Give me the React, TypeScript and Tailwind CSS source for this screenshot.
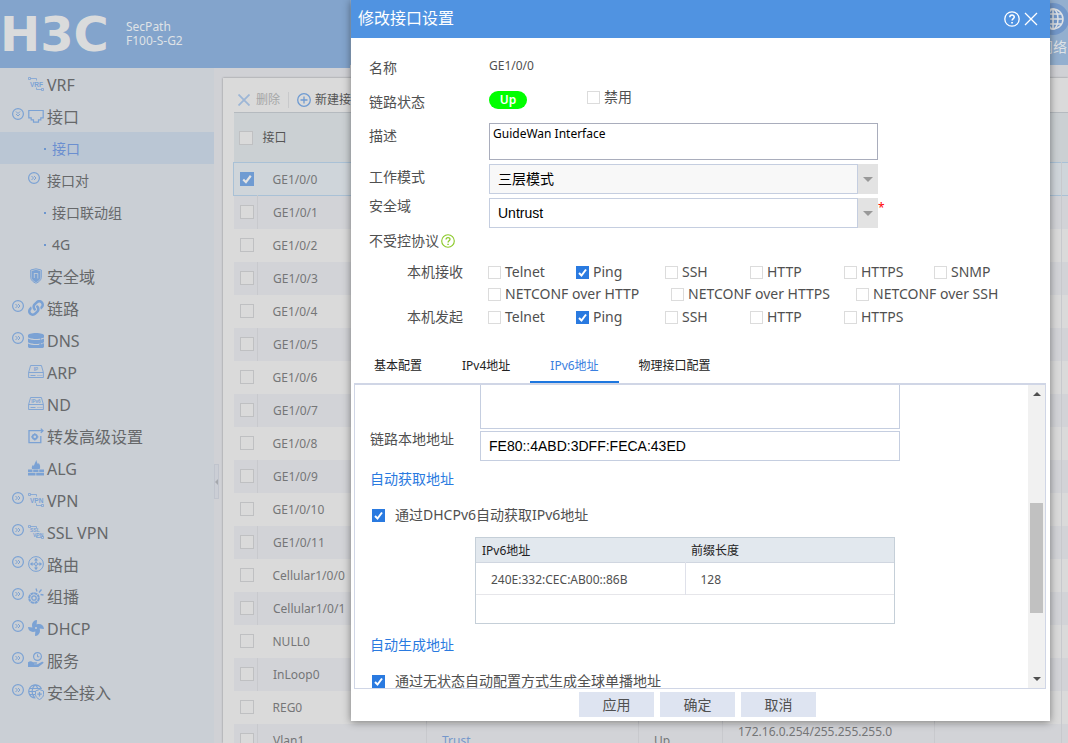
import * as React from "react";
import { useState } from "react";
import clsx from "clsx";
import { FaDatabase, FaFan, FaLink } from "react-icons/fa";

const WordIcon = ({ lines }: { lines: string[] }) => (
  <svg viewBox="0 0 16 16" className="size-4" fill="none" stroke="currentColor">
    <path d="M.5 1.500h2v2h-2zM2.500 2.500h6v2M13.500 12.500h2v2h-2zM13.500 13.500H8.500v-2" strokeWidth="0.8" />
    {lines.map((line, i) => (
      <text
        key={line}
        x={i === 0 ? 2 : 5}
        y={lines.length === 1 ? 10.5 : 8 + i * 5}
        fontSize={lines.length === 1 ? 6.5 : 5}
        fontWeight="bold"
        fontFamily="Liberation Sans, sans-serif"
        fill="currentColor"
        stroke="none"
      >
        {line}
      </text>
    ))}
  </svg>
);

const PortIcon = () => (
  <svg viewBox="0 0 16 16" className="size-4" fill="none" stroke="currentColor" strokeWidth="1.2">
    <path d="M.8 2.500h14.400v7.300h-2.400v2h-2.300v2.400h-5v-2.400H3.200v-2H.8z" />
  </svg>
);

const ShieldIcon = () => (
  <svg viewBox="0 0 16 16" className="size-4" fill="none" stroke="currentColor">
    <path d="M8 .8 13.300 2v7.200c0 3-2.600 5-5.300 6-2.700-1-5.300-3-5.300-6V2z" />
    <path d="M8 1.800 12.400 2.900v6.300c0 2.300-2.200 4.100-4.400 5-2.200-.9-4.400-2.700-4.400-5V2.900z" fill="currentColor" stroke="none" />
    <path d="M6.300 5v5M6.300 5.500h3.500v5" stroke="#cacfd5" strokeWidth="0.8" />
  </svg>
);

const DnsIcon = () => (
  <svg viewBox="0 0 16 16" className="size-4" fill="none" stroke="currentColor">
    <FaDatabase x="0" y="1" width="11" height="14" preserveAspectRatio="none" />
    <path d="M11 4.500h3M11 8.500h3M11 12.500h3M12.500 2.500v12" strokeWidth="0.7" />
    <path d="M14 3.500h2v2h-2zM14 7.500h2v2h-2zM14 11.500h2v2h-2z" fill="currentColor" stroke="none" />
  </svg>
);

const DriveIcon = ({ label }: { label: string }) => (
  <svg viewBox="0 0 16 16" className="size-4" fill="none" stroke="currentColor" strokeWidth="0.9">
    <path d="M.6 8.500h14.800v5H.6zM.6 8.500 2.600 1.500h10.800l2 7M2.500 11.500h5M9.500 11.500h1M11.500 11.500h1M13.500 11.500h.8" />
    <text
      x="8"
      y="6.8"
      textAnchor="middle"
      fontSize="4.5"
      fontWeight="bold"
      fontFamily="Liberation Sans, sans-serif"
      fill="currentColor"
      stroke="none"
    >
      {label}
    </text>
  </svg>
);

const ForwardIcon = () => (
  <svg viewBox="0 0 16 16" className="size-4" fill="none" stroke="currentColor" strokeWidth="1.3">
    <path d="M8.500 2.700H1v12h11.800V8M8.500 2.700H15M12.800.6 15 2.700l-2.200 2.200" />
    <circle cx="6.8" cy="8.8" r="2.2" strokeWidth="1.8" />
    <path d="M6.800 5.200v1M6.800 11.400v1M3.200 8.800h1M9.400 8.800h1" />
  </svg>
);

const FirewallIcon = () => (
  <svg viewBox="0 0 16 16" className="size-4" fill="currentColor">
    <path d="M4 9c-.7-2 .4-3.300 1-4.300.4.600.6 1 .7 1.600C6.600 4 7 2.500 8.500 0c0 2.300 1 3 1.600 4.300.4-.4.5-1 .5-1.500C12 4.800 12.700 7 11.700 9z" />
    <path d="M0 9.500h4.500v2.500H0zM5.200 9.500h5.300v2.500H5.200zM11.200 9.500H16v2.500h-4.800zM0 12.700h7.500v2.700H0zM8.200 12.700H16v2.700H8.200z" />
  </svg>
);

const RouteIcon = () => (
  <svg viewBox="0 0 16 16" className="size-4" fill="none" stroke="currentColor">
    <circle cx="8" cy="8" r="7.4" />
    <circle cx="8" cy="8" r="1.5" />
    <path d="M8 3v3M8 10v3M3 8h3M10 8h3" />
    <path d="M8 1.800 10 4.500H6zM8 14.200l2-2.700H6zM1.800 8l2.700-2v4zM14.200 8l-2.700-2v4z" fill="currentColor" stroke="none" />
  </svg>
);

const MulticastIcon = () => (
  <svg viewBox="0 0 16 16" className="size-4" fill="none" stroke="currentColor">
    <circle cx="6" cy="10" r="4.8" strokeWidth="2" strokeDasharray="3.2 0.5" />
    <circle cx="6" cy="10" r="2.2" strokeWidth="1.3" />
    <path d="M8 .5 9 3.500M13.500 1.500 11 4.500M15.500 7 12.500 6.500" strokeWidth="1.3" />
  </svg>
);

const ServiceIcon = () => (
  <svg viewBox="0 0 16 16" className="size-4" fill="none" stroke="currentColor">
    <circle cx="9.5" cy="4.5" r="3.9" strokeWidth="1.2" />
    <path d="M9.500 2.300v2.500h1.800" />
    <path
      d="M0 10.200c2-1.200 3.500-1 5 0h3.500c1 0 1 1.500 0 1.500H6v.5h3.500l4.500-2.400c1.200-.4 2 .6 1.200 1.400L11 14.600c-.5.400-1 .5-1.500.5H0z"
      fill="currentColor"
      stroke="none"
    />
  </svg>
);

const AccessIcon = () => (
  <svg viewBox="0 0 16 16" className="size-4" fill="none" stroke="currentColor">
    <path d="M7.500 14A6.600 6.600 0 1 1 13.500 5M7 .8C3 4.500 3.300 10 6.500 13.500M7 .8c1.500 1 2.500 2.500 2.800 4M1 4.500h11.500M.6 7.500H7M1.300 10.500H7" strokeWidth="1.2" />
    <path d="M11.500 5.500 15.500 7v3.500c0 2.300-2 4-4 5-2-1-4-2.700-4-5V7z" fill="#cacfd5" />
    <path d="M11.500 8v4.500M9.300 10.200h4.500" strokeWidth="1.3" />
  </svg>
);

const ToggleIcon = ({ open }: { open?: boolean }) => (
  <svg viewBox="0 0 12 12" className="size-3" fill="none" stroke="currentColor">
    <circle cx="6" cy="6" r="5.4" strokeWidth="1.2" />
    {open ? <path d="m4 3.500 2 2 2-2M4 6l2 2 2-2" /> : <path d="m3.500 4 2 2-2 2M6 4l2 2-2 2" />}
  </svg>
);

const HelpIcon = ({ className }: { className?: string }) => (
  <svg viewBox="0 0 16 16" className={clsx("size-4", className)} fill="none" stroke="currentColor" strokeWidth="1.3">
    <circle cx="8" cy="8" r="7.2" />
    <path d="M5.800 6.300c0-3 4.500-2.900 4.500-.2 0 1.600-2.200 1.600-2.200 3.500" strokeWidth="1.5" />
    <path d="M7.200 11h1.700v1.600H7.200z" fill="currentColor" stroke="none" />
  </svg>
);

interface MenuItem {
  name: string;
  icon?: React.ReactNode;
  level?: number;
  toggle?: "open" | "closed";
  active?: boolean;
}

const menu: MenuItem[] = [
  { name: "VRF", icon: <WordIcon lines={["VRF"]} /> },
  { name: "接口", icon: <PortIcon />, toggle: "open" },
  { name: "接口", level: 2, active: true },
  { name: "接口对", level: 2, toggle: "closed" },
  { name: "接口联动组", level: 2 },
  { name: "4G", level: 2 },
  { name: "安全域", icon: <ShieldIcon /> },
  { name: "链路", icon: <FaLink className="size-4" />, toggle: "closed" },
  { name: "DNS", icon: <DnsIcon />, toggle: "closed" },
  { name: "ARP", icon: <DriveIcon label="IP" /> },
  { name: "ND", icon: <DriveIcon label="IPv6" /> },
  { name: "转发高级设置", icon: <ForwardIcon /> },
  { name: "ALG", icon: <FirewallIcon /> },
  { name: "VPN", icon: <WordIcon lines={["VPN"]} />, toggle: "closed" },
  { name: "SSL VPN", icon: <WordIcon lines={["SSL", "VPN"]} />, toggle: "closed" },
  { name: "路由", icon: <RouteIcon />, toggle: "closed" },
  { name: "组播", icon: <MulticastIcon />, toggle: "closed" },
  { name: "DHCP", icon: <FaFan className="size-4" />, toggle: "closed" },
  { name: "服务", icon: <ServiceIcon />, toggle: "closed" },
  { name: "安全接入", icon: <AccessIcon />, toggle: "closed" },
];

const interfaces = [
  "GE1/0/0",
  "GE1/0/1",
  "GE1/0/2",
  "GE1/0/3",
  "GE1/0/4",
  "GE1/0/5",
  "GE1/0/6",
  "GE1/0/7",
  "GE1/0/8",
  "GE1/0/9",
  "GE1/0/10",
  "GE1/0/11",
  "Cellular1/0/0",
  "Cellular1/0/1",
  "NULL0",
  "InLoop0",
  "REG0",
  "Vlan1",
];

interface CheckboxProps {
  label?: string;
  title?: string;
  defaultChecked?: boolean;
  dimmed?: boolean;
  className?: string;
}

const Checkbox: React.FC<CheckboxProps> = ({ label, title, defaultChecked, dimmed, className }) => (
  <label className={clsx("flex items-center whitespace-nowrap", className ?? "gap-1")}>
    <span className="grid shrink-0">
      <input
        type="checkbox"
        aria-label={title}
        defaultChecked={defaultChecked}
        className={clsx(
          "peer appearance-none border [grid-area:1/1]",
          dimmed
            ? "size-[14px] border-[#bfc0c2] bg-[#dadada] checked:border-[#6f9bd2] checked:bg-[#6f9bd2]"
            : "size-[13px] border-[#dcdcdc] bg-white checked:border-[#2a7ae0] checked:bg-[#2a7ae0]"
        )}
      />
      <svg
        viewBox="0 0 13 13"
        className={clsx(
          "pointer-events-none invisible [grid-area:1/1] peer-checked:visible",
          dimmed ? "size-[14px] text-[#e4e4e4]" : "size-[13px] text-white"
        )}
        fill="none"
        stroke="currentColor"
        strokeWidth="2"
      >
        <path d="m3 7 2.500 2.500L10 3.500" />
      </svg>
    </span>
    {label}
  </label>
);

const Sidebar = () => (
  <nav className="w-[214px] shrink-0 bg-[#cacfd5] text-[#66686a]">
    <ul>
      {menu.map((item, i) => (
        <li key={i} className={clsx(item.active && "bg-[#bac6d4]")}>
          <a
            href="#"
            className={clsx(
              "flex h-8 items-center pt-[2px] whitespace-nowrap",
              item.level === 2 ? "text-sm" : "text-base",
              item.active && "text-[#6b8fd0]"
            )}
          >
            {item.level === 2 ? (
              <>
                <span className={clsx("flex shrink-0 text-[#7ba2d4]", item.toggle ? "w-[47px] pb-[6px] pl-7" : "w-[52px] pl-11")}>
                  {item.toggle ? <ToggleIcon /> : <span className="size-[2px] bg-[#6c96cf]" />}
                </span>
                {item.name}
              </>
            ) : (
              <>
                <span className="flex w-7 shrink-0 pb-[6px] pl-3 text-[#7ba2d4]">
                  {item.toggle && <ToggleIcon open={item.toggle === "open"} />}
                </span>
                <span className="w-[19px] shrink-0 pb-[2px] text-[#7ba2d4]">{item.icon}</span>
                {item.name}
              </>
            )}
          </a>
        </li>
      ))}
    </ul>
  </nav>
);

const InterfaceTable = () => (
  <table className="w-full min-w-[900px] table-fixed border-collapse text-xs">
    <colgroup>
      <col className="w-6" />
      <col className="w-[169px]" />
      <col className="w-[212px]" />
      <col className="w-[84px]" />
      <col className="w-[212px]" />
      <col className="w-[127px]" />
      <col />
    </colgroup>
    <thead>
      <tr className="h-[50px] border-t border-[#b5babf] bg-[#cbd0d3] text-left">
        <th className="pl-[5px]">
          <Checkbox title="全选" dimmed />
        </th>
        <th className="pl-[5px] font-normal text-[#555]">接口</th>
        <th colSpan={5} />
      </tr>
    </thead>
    <tbody className="text-[#757677]">
      {interfaces.map((name, i) => (
        <tr
          key={name}
          className={clsx(
            "h-[33px]",
            i === 0 && "border border-[#a9c1d6] bg-[#cfd5da]",
            i > 0 && (i % 2 ? "bg-[#d2d3d7]" : "bg-[#dadada]")
          )}
        >
          <td className="pl-[6px]">
            <Checkbox title={name} defaultChecked={i === 0} dimmed />
          </td>
          <td className={clsx("pt-[2px] pb-0 pl-[15px]", i % 2 === 1 && "border-l border-[#c8c9cd]")}>{name}</td>
          <td className="border-l border-[#c8c9cd] pt-[2px] pb-0 pl-[15px]">
            {name === "Vlan1" && (
              <a href="#" className="text-[#7597cb]">
                Trust
              </a>
            )}
          </td>
          <td className="border-l border-[#c8c9cd] pt-[2px] pb-0 pl-[15px]">{name === "Vlan1" && "Up"}</td>
          <td className="border-l border-[#c8c9cd] pt-0 pb-4 pl-[15px] leading-4">
            {name === "Vlan1" && "172.16.0.254/255.255.255.0"}
          </td>
          <td className="border-l border-[#c8c9cd]" />
          <td className="border-l border-[#c8c9cd]" />
        </tr>
      ))}
    </tbody>
  </table>
);

interface SelectProps {
  id: string;
  options: string[];
  className?: string;
}

const Select: React.FC<SelectProps> = ({ id, options, className }) => (
  <div className="relative w-[389px]">
    <select
      id={id}
      className={clsx(
        "block h-[30px] w-full appearance-none border border-[#c5cee0] pl-2 font-['Liberation_Sans','Noto_Sans_CJK_SC',sans-serif] text-sm text-black",
        className
      )}
    >
      {options.map((option) => (
        <option key={option}>{option}</option>
      ))}
    </select>
    <span className="pointer-events-none absolute inset-y-0 right-0 flex w-[21px] items-center justify-center border-l border-[#c5cee0] bg-[#e3e3e3]">
      <svg viewBox="0 0 10 5" className="h-[5px] w-[10px] fill-[#999]">
        <path d="M0 0h10L5 5z" />
      </svg>
    </span>
  </div>
);

const tabs = ["基本配置", "IPv4地址", "IPv6地址", "物理接口配置"];

const Ipv6Panel = () => (
  <div className="flex min-h-0 flex-1 border border-t-2 border-[#d0d6e6]">
    <div className="flex-1 overflow-hidden pl-[15px] text-sm">
      <div className="ml-[110px] h-11 w-[420px] border border-t-0 border-[#c5cee0]" />
      <div className="mt-[2px] flex">
        <label htmlFor="linkLocal" className="w-[110px] leading-4">
          链路本地地址
        </label>
        <input
          id="linkLocal"
          type="text"
          defaultValue="FE80::4ABD:3DFF:FECA:43ED"
          className="h-[30px] w-[420px] border border-[#c5cee0] pl-2 font-['Liberation_Sans',sans-serif] text-black"
        />
      </div>
      <h3 className="mt-2 leading-5 text-[#2a7ae0]">自动获取地址</h3>
      <Checkbox label="通过DHCPv6自动获取IPv6地址" defaultChecked className="mt-4 ml-[2px] gap-[10px] leading-5" />
      <div className="mt-3 ml-[105px] h-[87px] w-[420px] border border-[#c5cfd8]">
        <table className="w-full table-fixed text-left text-xs">
          <thead>
            <tr className="h-6 border-b border-[#d0d6e0] bg-[#e2e8ee] text-[#222]">
              <th className="w-[209px] pt-[2px] pl-[6px] font-normal">IPv6地址</th>
              <th className="pt-[2px] pl-[6px] font-normal">前缀长度</th>
            </tr>
          </thead>
          <tbody>
            <tr className="h-8 border-b border-[#e6e6ea]">
              <td className="border-r border-[#dfe1ea] pt-[3px] pl-[15px]">240E:332:CEC:AB00::86B</td>
              <td className="pt-[3px] pl-[15px]">128</td>
            </tr>
          </tbody>
        </table>
      </div>
      <h3 className="mt-[11px] leading-5 text-[#2a7ae0]">自动生成地址</h3>
      <Checkbox
        label="通过无状态自动配置方式生成全球单播地址"
        defaultChecked
        className="mt-4 ml-[2px] gap-[10px] leading-5"
      />
    </div>
    <div className="flex w-[17px] flex-col items-center justify-between bg-[#f1f1f1] py-[7px]">
      <svg viewBox="0 0 8 4" className="h-1 w-2 fill-[#505050]">
        <path d="M4 0 8 4H0z" />
      </svg>
      <span className="mt-[42px] h-[110px] w-[13px] bg-[#c1c1c1]" />
      <svg viewBox="0 0 8 4" className="h-1 w-2 fill-[#505050]">
        <path d="M0 0h8L4 4z" />
      </svg>
    </div>
  </div>
);

const EditDialog = () => {
  const [activeTab, setActiveTab] = useState("IPv6地址");

  return (
    <section
      role="dialog"
      aria-label="修改接口设置"
      className="absolute top-0 right-[18px] flex h-[721px] w-[699px] flex-col bg-white text-sm text-[#505050] shadow-[0_1px_8px_rgba(0,0,0,0.45)]"
    >
      <header className="flex h-[38px] shrink-0 items-center bg-[#5093e1] pr-3 pl-[7px] text-white">
        <h2 className="flex-1 pb-[2px] text-base">修改接口设置</h2>
        <button type="button" aria-label="帮助">
          <HelpIcon />
        </button>
        <button type="button" aria-label="关闭" className="ml-1">
          <svg viewBox="0 0 14 14" className="size-[14px]" fill="none" stroke="currentColor" strokeWidth="1.3">
            <path d="m1 1 12 12M13 1 1 13" />
          </svg>
        </button>
      </header>

      <div className="shrink-0 pt-[14px] pl-[18px]">
        <div className="flex h-8 items-center">
          <span className="w-[120px]">名称</span>
          <span className="pb-1 text-xs">GE1/0/0</span>
        </div>
        <div className="flex h-9 items-center">
          <span className="w-[120px]">链路状态</span>
          <div className="flex items-center pb-1">
            <span className="h-[18px] w-[38px] rounded-full bg-[#00ff00] text-center text-xs leading-[18px] font-semibold text-white">
              Up
            </span>
            <Checkbox label="禁用" className="ml-[60px] gap-1 pb-[6px] leading-5" />
          </div>
        </div>
        <div className="flex pt-[3px]">
          <label htmlFor="description" className="w-[120px] leading-[26px]">
            描述
          </label>
          <textarea
            id="description"
            defaultValue="GuideWan Interface"
            className="block h-[37px] w-[389px] resize-none border border-[#a9adbc] px-[3px] py-[2px] text-xs text-black"
          />
        </div>
        <div className="mt-1 flex">
          <label htmlFor="workMode" className="w-[120px] leading-[26px]">
            工作模式
          </label>
          <Select id="workMode" options={["三层模式", "二层模式"]} className="bg-[#f8f8f8]" />
        </div>
        <div className="mt-1 flex">
          <label htmlFor="zone" className="w-[120px] leading-4">
            安全域
          </label>
          <Select id="zone" options={["Untrust", "Trust"]} className="bg-white" />
          <span className="text-xs leading-5 text-[#ff0000]">*</span>
        </div>
        <div className="flex items-center leading-[26px]">
          不受控协议
          <HelpIcon className="ml-[2px] size-[14px] text-[#8cc92a]" />
        </div>
        <div className="flex flex-col pt-[7px] pl-[38px] leading-[22px]">
          <div className="flex">
            <span className="w-[81px]">本机接收</span>
            <div className="grid grid-cols-[88px_89px_85px_94px_90px_1fr]">
              <Checkbox label="Telnet" />
              <Checkbox label="Ping" defaultChecked />
              <Checkbox label="SSH" />
              <Checkbox label="HTTP" />
              <Checkbox label="HTTPS" />
              <Checkbox label="SNMP" />
            </div>
          </div>
          <div className="ml-[81px] grid grid-cols-[183px_185px_1fr]">
            <Checkbox label="NETCONF over HTTP" />
            <Checkbox label="NETCONF over HTTPS" />
            <Checkbox label="NETCONF over SSH" />
          </div>
          <div className="mt-[1px] flex">
            <span className="w-[81px]">本机发起</span>
            <div className="grid grid-cols-[88px_89px_85px_94px_90px_1fr]">
              <Checkbox label="Telnet" />
              <Checkbox label="Ping" defaultChecked />
              <Checkbox label="SSH" />
              <Checkbox label="HTTP" />
              <Checkbox label="HTTPS" />
            </div>
          </div>
        </div>
      </div>

      <div className="mt-5 mr-1 ml-[3px] flex min-h-0 flex-1 flex-col">
        <div role="tablist" className="flex h-[35px] shrink-0 text-xs text-[#222]">
          {tabs.map((tab) => (
            <button
              key={tab}
              type="button"
              role="tab"
              aria-selected={activeTab === tab}
              onClick={() => setActiveTab(tab)}
              className={clsx(
                "border-b-2 px-5 pt-[2px]",
                activeTab === tab ? "border-[#1d77df] text-[#3a80e0]" : "border-transparent"
              )}
            >
              {tab}
            </button>
          ))}
        </div>
        <Ipv6Panel />
      </div>

      <footer className="flex h-8 shrink-0 justify-center gap-[6px] pt-[3px] pr-[6px]">
        {["应用", "确定", "取消"].map((text) => (
          <button key={text} type="button" className="h-[25px] w-[75px] bg-[#dee4f1]">
            {text}
          </button>
        ))}
      </footer>
    </section>
  );
};

export default function App() {
  return (
    <div className="relative flex h-screen flex-col overflow-hidden bg-[#d0d1d5] font-['Noto_Sans','Noto_Sans_CJK_SC',sans-serif]">
      <header className="flex shrink-0 items-start text-[#dfe2e6]">
        <div className="flex h-[68px] w-[350px] items-center bg-[#83a4cc]">
          <span className="w-[126px] font-['DejaVu_Sans',sans-serif] text-[48px] leading-none font-bold text-[#dadbdc]">
            H3C
          </span>
          <p className="text-xs leading-[14px]">
            SecPath
            <br />
            F100-S-G2
          </p>
        </div>
        <div className="flex h-[65px] flex-1 justify-end bg-[#93afcf]">
          <a href="#" className="flex w-[30px] flex-col items-center pt-[3px] text-sm leading-5">
            <span className="mb-[2px] flex size-8 items-center justify-center rounded-full bg-[#7398ca]">
              <svg viewBox="0 0 22 22" className="size-[22px]" fill="none" stroke="currentColor" strokeWidth="1.5">
                <circle cx="11" cy="11" r="10" />
                <ellipse cx="11" cy="11" rx="5" ry="10" />
                <path d="M11 1v20M1 11h20M2.500 6h17M2.500 16h17" />
              </svg>
            </span>
            网络
          </a>
        </div>
      </header>

      <div className="flex min-h-0 flex-1">
        <Sidebar />
        <div className="flex w-[9px] shrink-0 items-center pt-[152px]">
          <button
            type="button"
            aria-label="收起菜单"
            className="flex h-[35px] w-[5px] items-center justify-end border border-[#c0c4cd] bg-[#cbced5]"
          >
            <svg viewBox="0 0 3 6" className="h-[6px] w-[3px] fill-[#a5a8ad]">
              <path d="M3 0v6L0 3z" />
            </svg>
          </button>
        </div>
        <main className="mt-[10px] min-w-0 flex-1 overflow-hidden bg-[#dadada] pl-[10px] shadow-[0_0_2px_rgba(0,0,0,0.35)]">
          <div className="flex h-[34px] items-center pt-[9px] text-xs whitespace-nowrap">
            <button type="button" className="flex items-center gap-[6px] pl-[5px] text-[#a5a6a7]">
              <svg viewBox="0 0 12 12" className="size-3" fill="none" stroke="#9db6d6" strokeWidth="1.8">
                <path d="m.5.500 11 11M11.500.5l-11 11" />
              </svg>
              删除
            </button>
            <span className="mx-2 h-4 border-l border-[#c8c9cb]" />
            <button type="button" className="flex items-center gap-1 text-[#555]">
              <svg viewBox="0 0 14 14" className="size-[14px]" fill="none" stroke="#6f9bd2" strokeWidth="1.3">
                <circle cx="7" cy="7" r="6.3" />
                <path d="M7 3.500v7M3.500 7h7" />
              </svg>
              新建接口
            </button>
          </div>
          <InterfaceTable />
        </main>
      </div>

      <EditDialog />
    </div>
  );
}
